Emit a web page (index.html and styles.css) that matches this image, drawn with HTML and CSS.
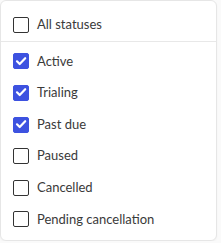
FILE: index.html
```html
<!DOCTYPE html>
<html lang="en">
  <head>
    <meta charset="UTF-8" />
    <meta name="viewport" content="width=device-width, initial-scale=1.0" />
    <title>Status filter</title>
    <link rel="stylesheet" href="styles.css">
  </head>
  <body>
    <div class="panel">
      <div class="all">
        <label class="option">
          <span class="box"></span>
          <span>All statuses</span>
        </label>
      </div>
      <div class="list">
        <label class="option">
          <span class="box checked">
            <svg viewBox="0 0 16 16" width="16" height="16"><path d="M4 8.3l2.7 2.7L12.2 5.2" fill="none" stroke="#fff" stroke-width="2.2" stroke-linecap="round" stroke-linejoin="round"/></svg>
          </span>
          <span>Active</span>
        </label>
        <label class="option">
          <span class="box checked">
            <svg viewBox="0 0 16 16" width="16" height="16"><path d="M4 8.3l2.7 2.7L12.2 5.2" fill="none" stroke="#fff" stroke-width="2.2" stroke-linecap="round" stroke-linejoin="round"/></svg>
          </span>
          <span>Trialing</span>
        </label>
        <label class="option">
          <span class="box checked">
            <svg viewBox="0 0 16 16" width="16" height="16"><path d="M4 8.3l2.7 2.7L12.2 5.2" fill="none" stroke="#fff" stroke-width="2.2" stroke-linecap="round" stroke-linejoin="round"/></svg>
          </span>
          <span>Past due</span>
        </label>
        <label class="option">
          <span class="box"></span>
          <span>Paused</span>
        </label>
        <label class="option">
          <span class="box"></span>
          <span>Cancelled</span>
        </label>
        <label class="option">
          <span class="box"></span>
          <span>Pending cancellation</span>
        </label>
      </div>
    </div>
  </body>
</html>
```

FILE: styles.css
```css
body {
  margin: 0;
  padding: 0;
  background: #fafafa;
  font-family: Lato, "Noto Sans", sans-serif;
  color: #3a3a3a;
}
.panel {
  width: 217px;
  height: 241px;
  box-sizing: border-box;
  background: #fff;
  border: 1px solid #e6e6e6;
  border-radius: 6px;
  box-shadow: 0 1px 2px rgba(0, 0, 0, 0.04);
}
.all {
  padding-top: 8px;
  border-bottom: 1px solid #e8e8e8;
}
.list {
  padding-top: 4px;
}
.option {
  display: flex;
  align-items: center;
  gap: 8px;
  padding: 6px 12px;
  font-size: 13px;
  line-height: 19.6px;
}
.box {
  width: 16px;
  height: 16px;
  box-sizing: border-box;
  border: 1.5px solid #333;
  border-radius: 2px;
  display: flex;
}
.box.checked {
  background: #3d52e0;
  border-color: #3d52e0;
}
.box svg {
  margin: -1.5px;
}
```
